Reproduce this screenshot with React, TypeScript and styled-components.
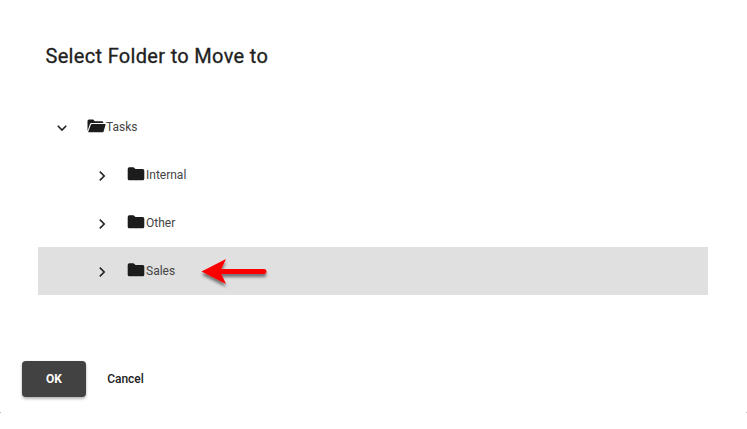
import React from 'react';
import styled, { createGlobalStyle } from 'styled-components';

const GlobalStyle = createGlobalStyle`
  body { margin: 0; background: #fff; font-family: Roboto, sans-serif; color: #212121; }
  * { box-sizing: border-box; }
`;

const Dialog = styled.main`
  width: 747px;
  height: 413px;
  padding: 40px 22px 0;
  display: flex;
  flex-direction: column;
  position: relative;
`;

const Title = styled.h1`
  margin: 0 0 0 23.5px;
  height: 32px;
  font-size: 20px;
  line-height: 32px;
  font-weight: 400;
  -webkit-text-stroke: 0.3px #212121;
  letter-spacing: 0.32px;
  white-space: nowrap;
`;

const Tree = styled.ul`
  list-style: none;
  margin: 31px 17px 0 16px;
  padding: 0;
`;

const Row = styled.li<{ $level: number; $selected?: boolean }>`
  display: flex;
  align-items: center;
  height: 48px;
  padding-left: ${(p) => 16 + p.$level * 40}px;
  background: ${(p) => (p.$selected ? '#e0e0e0' : 'transparent')};
`;

const Chevron = styled.svg`
  width: 16px;
  height: 16px;
  margin: 2px 17px 0 0;
  flex: none;
`;

const Folder = styled.svg`
  width: 19px;
  height: 16px;
  margin-top: -2px;
  flex: none;
`;

const Label = styled.span`
  font-size: 12px;
  line-height: 16px;
  font-weight: 400;
  color: #444;
`;

const Pointer = styled.svg`
  width: 74px;
  height: 34px;
  margin: 5px 0 0 24px;
  overflow: visible;
`;

const Actions = styled.div`
  display: flex;
  margin-top: 66px;
`;

const Button = styled.button<{ $primary?: boolean }>`
  width: ${(p) => (p.$primary ? 64 : 79)}px;
  height: 36px;
  padding: 0;
  border: 0;
  border-radius: 4px;
  font: 500 12px/36px Roboto, sans-serif;
  font-weight: ${(p) => (p.$primary ? 700 : 500)};
  color: ${(p) => (p.$primary ? '#fff' : '#212121')};
  background: ${(p) => (p.$primary ? '#424242' : 'transparent')};
  box-shadow: ${(p) => (p.$primary ? '0 2px 3px rgba(0,0,0,.28), 0 0 1px rgba(0,0,0,.2)' : 'none')};
`;

const Corner = styled.i<{ $right?: boolean }>`
  position: absolute;
  bottom: 0;
  ${(p) => (p.$right ? 'right: 0;' : 'left: 0;')}
  width: 1px;
  height: 1px;
  background: #bbb;
`;

const items = [
  { name: 'Tasks', level: 0, open: true },
  { name: 'Internal', level: 1 },
  { name: 'Other', level: 1 },
  { name: 'Sales', level: 1, selected: true },
];

function FolderIcon({ open }: { open?: boolean }) {
  return (
    <Folder viewBox="0 0 19 16" fill="#1c1c1c">
      {open ? (
        <>
          <path d="M.5 13V3Q.5 1.5 2 1.5h4.2l1.6 1.8h7.1q1.4 0 1.4 1.3v.5H4.2Q3.3 5.1 3 6L.5 13z" />
          <path d="M4.9 6.1h13.4q.5 0 .3.5l-2 6.8q-.3.9-1.2.9H1.8q-.8 0-.5-.8L3.8 6.9q.3-.8 1.1-.8z" />
        </>
      ) : (
        <path d="M2.3 1.3h4.2l2 1.8h7.2q1.6 0 1.6 1.6v8q0 1.6-1.6 1.6H2.3q-1.6 0-1.6-1.6V2.9q0-1.6 1.6-1.6z" />
      )}
    </Folder>
  );
}

function RedArrow() {
  return (
    <Pointer viewBox="0 0 74 34">
      <defs>
        <filter id="shadow" x="-20%" y="-30%" width="140%" height="180%">
          <feDropShadow dx="0" dy="3" stdDeviation="1.8" floodColor="#000" floodOpacity=".5" />
        </filter>
      </defs>
      <path
        filter="url(#shadow)"
        fill="#fc0000"
        d="M2.5 14.5 27 2 22.3 12H65a2.5 2.5 0 0 1 0 5H22.3L27 27z"
      />
    </Pointer>
  );
}

export default function App() {
  return (
    <>
      <GlobalStyle />
      <Dialog>
        <Title>Select Folder to Move to</Title>
        <Tree>
          {items.map((item) => (
            <Row key={item.name} $level={item.level} $selected={item.selected}>
              <Chevron viewBox="0 0 16 16" fill="none" stroke="#212121" strokeWidth="1.6">
                <path d={item.open ? 'M3.8 5.8 8 10 12.2 5.8' : 'M5.8 3.6 10.2 8 5.8 12.4'} />
              </Chevron>
              <FolderIcon open={item.open} />
              <Label>{item.name}</Label>
              {item.selected && <RedArrow />}
            </Row>
          ))}
        </Tree>
        <Actions>
          <Button $primary>OK</Button>
          <Button>Cancel</Button>
        </Actions>
        <Corner />
        <Corner $right />
      </Dialog>
    </>
  );
}
